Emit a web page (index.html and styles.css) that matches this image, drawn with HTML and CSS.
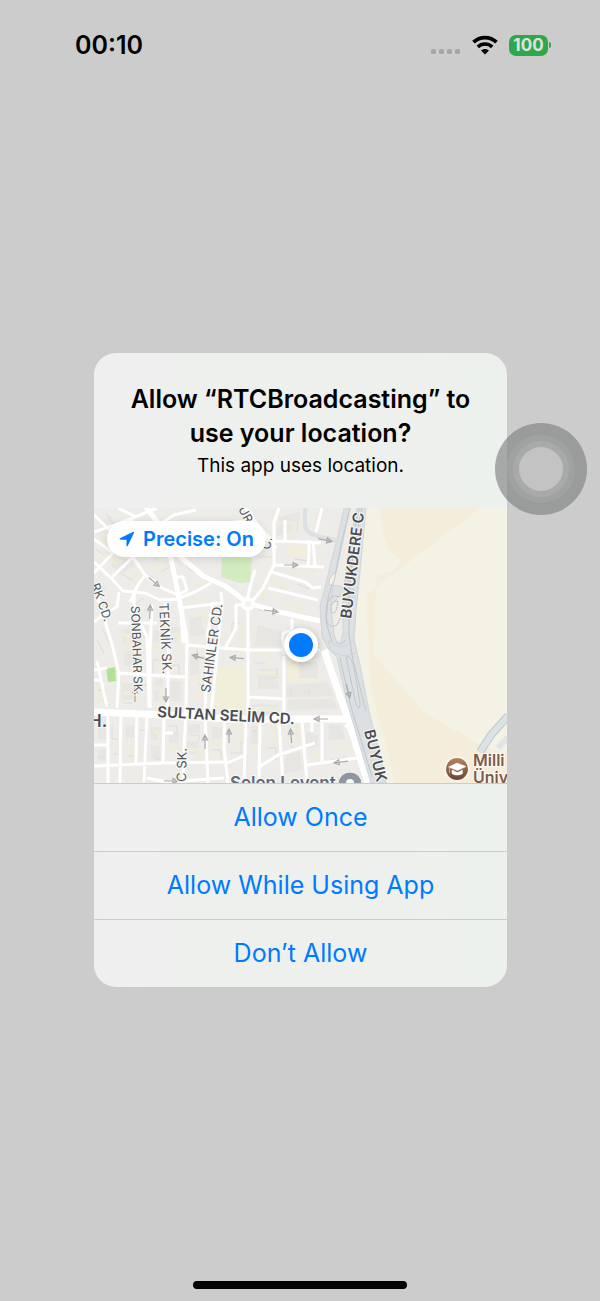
FILE: index.html
```html
<!DOCTYPE html>
<html lang="en">
<head>
<meta charset="utf-8">
<meta name="viewport" content="width=device-width, initial-scale=1">
<title>Location permission</title>
<link rel="stylesheet" href="styles.css">
</head>
<body>
<header class="status-bar">
  <time class="clock">00:10</time>
  <div class="indicators">
    <svg class="signal" width="30" height="6" viewBox="0 0 30 6" aria-hidden="true">
      <rect x="0" y="0" width="5" height="5" rx="1.5"/><rect x="8" y="0" width="5" height="5" rx="1.5"/><rect x="16" y="0" width="5" height="5" rx="1.5"/><rect x="24" y="0" width="5" height="5" rx="1.5"/>
    </svg>
    <svg class="wifi" width="26" height="20" viewBox="0 0 26 20" aria-hidden="true">
      <path d="M1.500 7.200C8 1 18 1 24.500 7.200" fill="none" stroke="#000" stroke-width="3.8"/>
      <path d="M5.800 11.900c4.200-3.900 10.200-3.900 14.400 0" fill="none" stroke="#000" stroke-width="3.600"/>
      <path d="M9 15.500c2.300-2.100 5.700-2.100 8 0L13 19.600z"/>
    </svg>
    <div class="battery"><span class="level">100</span><span class="tip"></span></div>
  </div>
</header>

<main class="stage">
  <section class="dialog" role="alertdialog" aria-labelledby="title" aria-describedby="reason">
    <div class="message">
      <h1 id="title" class="title">Allow “RTCBroadcasting” to use your location?</h1>
      <p id="reason" class="reason">This app uses location.</p>
    </div>
    <div class="map">
      <svg class="map-art" viewBox="94 508 413 275" preserveAspectRatio="xMidYMid slice">
        <defs>
          <linearGradient id="brown" x1="0" y1="0" x2="0" y2="1"><stop offset="0" stop-color="#b98563"/><stop offset="1" stop-color="#68432e"/></linearGradient>
          <g id="arrow" fill="none" stroke="#a9a9ab" stroke-width="1.2"><path d="M-7 0H6M2-2.500L7 0L2 2.500z"/></g>
        </defs>
        <rect x="94" y="508" width="413" height="275" fill="#edece8"/>
        <path fill="#f4eddb" d="M364 508H507V783H384L368 707L353 640L354 600z"/>
        <path fill="#f4f2e5" d="M366 508H381L382 532L388 548L401 560L394 571L375 575L376 587L480 508H507V755L480 744L426 714L373 654L376 587L366 595L371 690L388 752L395 783H384L368 707L353 640L354 600z"/>
        <!-- parks, plazas and building plots -->
        <path fill="#d2ebbf" d="M222 556L252 558L250 582L240 583L221 577z"/>
        <path fill="#b4e294" d="M106 669L115 667L116 681L108 682z"/>
        <path fill="#f1efd9" d="M212 667L245 666L245 711L210 704zM288 545L307 545L307 555L288 555zM287 657L310 655L322 680L287 681zM289 634L300 634V657H287z"/>
        <g fill="#e7e6e3">
          <path d="M299 662H318V678H299zM287 685L328 682L334 696L286 697zM252 704L279 705V716H252zM258 669L278 668V689H258zM279 517L300 512L298 531L276 536zM258 625L282 631L280 646L254 646zM288 700L333 699L338 709L287 710zM251 726L258 726V744H251zM286 755L300 751L302 770L284 774zM306 731L318 735V746L306 749zM329 724L341 725L345 739L328 741zM190 618L205 615L204 635L190 637z"/>
          <path d="M126 726h8v12h-8zM151 727h10v13h-10zM169 732h10v11h-10zM188 724h12v9h-12zM212 727h10v12h-10zM123 629h8v15h-8zM153 630h9v12h-9zM171 627h9v15h-9zM124 649h9v17h-9zM154 679h9v22h-9zM171 681h10v20h-10zM122 683h12v17h-12zM98 717h8v22h-8zM151 746h9v13h-9zM98 750h8v11h-8zM187 741h12v13h-12zM190 657h9v18h-9zM99 521l12-5 8 10-10 8zM111 565l13-8 11 9-14 8zM97 583l9 5-6 10-5-5zM149 549l9-7 8 12-11 8z"/>
        </g>
        <g class="plots"><path d="M100 534l11 12 12-7M128 517l11 8 7-7M103 552l13 11 9-7M128 582l10-8 6 4M151 565l11 5 5-9M96 587l7 6-3 6M119 635h9v14h-9M141 628v17h7M154 648h8v15h-5M172 635h7v14M99 680v21h6M123 693h11v11M154 688h7v13M188 681h12v16h-8M125 747h8v13h-8M154 732h6v10M168 749h11v9M188 750h11v9h-6M211 741l10 5-3 13M232 727h10v14h-10M252 747h7v11M267 727h9v14h-9M287 726h10v15M309 752l11 3-7 6M333 744l11 1 2 8M256 673h20v8M252 709h27M255 654h14v11M291 569l14 4 12-2M270 579l15 6-10 7M281 602l20 5-2 7M257 586l9 7-7 9M278 523h17l-2 14M283 535v5h10M194 570l14 9-8 6M188 599h16M193 613h11v15M234 625h8v26h-8"/></g>
        <g class="plot-lines"><path d="M106 513l7 11-12 9M129 536l-9 7 7 7M144 526l9 10M96 549l8 6M119 572l13 8M144 598l-12 8 7 7M171 565l-9 7M175 537l9 8M103 629l7 16M97 640l7 13M127 656h7v10M139 637h8v11M159 660h-6v14M171 665h8v9M98 690h9M123 703h9M139 685h9v14M188 646h9v8M199 684l8 2M98 757h7M112 726v13h6M113 754h6M128 756h7M140 730h5v12M154 759h6M168 726h9v8M190 735h9v6M213 750h8v9M230 753h11v-11M252 731h5M267 748h9v12M290 746l8 4M331 759h13v-4M239 623h-7v11M258 610h16v7M255 663h10M277 668v10h-6M291 689v7M309 689v5M265 540h11M258 557h15v7M294 559l15 2M270 569l15 8M297 584l13 5M246 546h8M198 545l12 7M184 532l10 6M194 572l-8-6"/></g>
        <!-- streets -->
        <g class="lane">
          <path d="M94 562L112 579L123 591L145 593L160 600L177 599L197 591L211 583M94 539L113 553L134 516L118 508M133 557L145 575L162 588L178 595L187 590L183 577L175 577M145 575L138 585L130 602M94 622L107 612L117 607L119 592M118 623L157 623M181 608L222 603L221 592M110 579L133 557L123 543L94 515M94 532L115 525L157 508M113 553L94 573M157 526L174 515L196 510M176 550L218 524L254 520"/>
          <path d="M97 595L113 648L119 674L117 708M97 661L107 707M94 670L107 668M94 680L101 680M118 673L185 677M134 593L134 610L147 637L149 707M152 605L150 650L150 708M165 603L169 638L167 714M183 615L187 637L186 704L183 783M187 645L248 650M213 602L208 633L205 714L208 783M222 603L211 715"/>
          <path d="M108 710V783M121 713L120 783M137 713L136 764M147 714L144 782M164 716L163 764M225 718L224 747L228 783M246 720L244 783M260 721L259 783M279 721L283 783M302 722L307 783M322 723L322 761M94 766L163 763L230 762L246 755M94 745H108M147 778L167 782L224 778M163 733H173M307 765L357 758M259 767L278 755L315 743M312 722V732M194 718L193 710M345 725L367 744L375 742"/>
          <path d="M248 605V715M284 656V718M247 650H320M248 697L284 699M292 619L292 628Q292 632 286 632Q282 633 283 640L284 655M248 604L236 605V628L224 650"/>
          <path d="M279 508L274 523V565L263 588L250 604M275 541L304 542L321 543M285 520V540M313 541L315 566M309 540V553L308 566M322 508L316 532M274 565L324 567M272 572L305 582L313 588L321 587M268 588L318 600M255 570L252 580L247 599"/>
        </g>
        <path class="street" d="M145 506L160 525L182 558L203 576L225 586L248 603L279 612L320 621M166 533L172 563L178 593L182 615L184 643M246 508L254 522L270 540L275 549"/>
        <path class="avenue" d="M94 712L164 715L230 719L348 719M324 650L334 679L348 719L368 783"/>
        <circle cx="248" cy="604" r="5" fill="#f3f2ef" stroke="#fff" stroke-width="4"/>
        <!-- divided highway -->
        <path class="highway" d="M344 508L337 540L331 562L326 584L320 606L322 636L328 648L337 657L347 702L367 770L371 783H386L378 748L369 711L360 665L354 640L356 610L359 582L366 508H357L349 546L343 590L343 633L339 648L334 634L331 609L333 585L340 555L350 508z"/>
        <path class="highway" d="M333 585L343 587L355 590L354 598L340 596L331 605zM328 640Q341 653 354 640L357 652Q341 661 330 649z"/>
        <path class="highway-line" d="M350 508L341 545L336 571L328 598L326 622L332 642M362 508L354 548L349 590V635L353 660L366 711M359 508L351 548M353 540L348 582M340 658L351 707L372 777M346 657L350 676L356 704Q360 713 360 703L354 668Q350 653 346 657M340 597Q328 592 326 610Q325 631 337 625L342 615M338 601Q330 601 331 611Q335 617 337 607zM337 642q5 4 8-2"/>
        <path fill="#f4f2e5" stroke="#c9ced3" d="M333 574Q336 571 335 578Q332 588 329 584Q328 579 333 574z"/>
        <path d="M305 508V524Q305 536 328 538L337 541" fill="none" stroke="#dce0e2" stroke-width="4"/>
        <path d="M480 752L491 735L508 716" fill="none" stroke="#bfc9d0" stroke-width="8"/><path d="M480 752L491 735L508 716" fill="none" stroke="#dce1e3" stroke-width="6"/><path d="M498 748l10-11" stroke="#e2e4e5" stroke-width="6"/>
        <!-- traffic direction -->
        <use href="#arrow" transform="translate(154 582) rotate(40)"/><use href="#arrow" transform="translate(150 612) rotate(-88)"/>
        <use href="#arrow" transform="translate(291 565)"/><use href="#arrow" transform="translate(271 611) rotate(8)"/><use href="#arrow" transform="translate(325 540) rotate(12)"/>
        <use href="#arrow" transform="translate(166 695) rotate(90)"/><use href="#arrow" transform="translate(135 695) rotate(-90)"/><use href="#arrow" transform="translate(199 657) rotate(-165)"/><use href="#arrow" transform="translate(237 658) rotate(-175)"/>
        <use href="#arrow" transform="translate(205 742) rotate(-90)"/><use href="#arrow" transform="translate(229 736) rotate(-90)"/><use href="#arrow" transform="translate(291 736) rotate(-95)"/><use href="#arrow" transform="translate(321 719) rotate(180)"/><use href="#arrow" transform="translate(341 762) rotate(173)"/><use href="#arrow" transform="translate(348 691) rotate(75)"/><use href="#arrow" transform="translate(171 781)"/>
        <!-- street names -->
        <g class="name">
          <text transform="translate(91 585) rotate(70)">RK CD.</text>
          <text transform="translate(131 606) rotate(88)">SONBAHAR SK.</text>
          <text class="wide" transform="translate(159 603) rotate(87)">TEKNİK SK.</text>
          <text class="wide" transform="translate(210 693) rotate(-82)">SAHINLER CD.</text>
          <text class="wide" transform="translate(186 782) rotate(-89)">C SK.</text>
          <text transform="translate(238 509) rotate(62)">UR</text>
          <text transform="translate(270 550) rotate(-80)">C.</text>
        </g>
        <g class="name major">
          <text transform="translate(157 717) rotate(3)">SULTAN SELİM CD.</text>
          <text class="large" x="89" y="727">H.</text>
          <text transform="translate(351 619) rotate(-83)">BUYUKDERE C</text>
          <text transform="translate(364 731) rotate(76)">BUYUK</text>
          <text class="place" x="230" y="789">Selen Levent</text>
        </g>
        <circle cx="350" cy="784" r="12" fill="#8f969f" stroke="#f4f3f0" stroke-width="1"/><circle cx="350" cy="783" r="4" fill="#fff"/>
        <circle cx="457" cy="769" r="12" fill="url(#brown)" stroke="#f8f4ea" stroke-width="2"/>
        <path d="M448.500 767l8.500-4 9 3.500-8.500 4zM452 770l5.500 2.500 5-2.500v3.500c-3 2-7.500 2-10.500 0zM449.500 768v5" fill="#fff" stroke="#fff" stroke-width=".5"/>
        <g class="school"><text x="473" y="766">Milli</text><text x="473" y="783">Üniv</text></g>
      </svg>
      <span class="position"></span>
      <button class="precise" type="button">
        <svg width="18" height="16" viewBox="0 0 18 16" aria-hidden="true"><path d="M2 7.300L15.300.7Q16.500.4 16 1.700L9.700 15Q8.800 16 8.500 14.700V8.700H2.500Q.8 8.300 2 7.300z" fill="#007aff"/></svg>
        <span>Precise: On</span>
      </button>
    </div>
    <div class="actions">
      <button class="action" type="button">Allow Once</button>
      <button class="action" type="button">Allow While Using App</button>
      <button class="action" type="button">Don’t Allow</button>
    </div>
  </section>
</main>

<button class="assistive" type="button" aria-label="AssistiveTouch"><span class="ring"><span class="core"></span></span></button>
<footer class="home"><span class="home-bar"></span></footer>
</body>
</html>
```

FILE: styles.css
```css
* { box-sizing: border-box; }
body {
  margin: 0;
  min-height: 100vh;
  display: flex;
  flex-direction: column;
  background: #ccc;
  color: #000;
  font-family: Inter, "Liberation Sans", sans-serif;
}
button { border: 0; margin: 0; font-family: inherit; color: #007aff; cursor: pointer; }
.status-bar {
  display: flex;
  justify-content: space-between;
  align-items: center;
  height: 90px;
  padding: 0 49px 0 75px;
}
.clock { font-size: 25px; font-weight: 600; }
.indicators { display: flex; align-items: center; gap: 11px; }
.signal { fill: #a5a5a5; margin-top: 13px; }
.battery { display: flex; align-items: center; gap: 1px; }
.level {
  width: 39px;
  height: 21px;
  border-radius: 7px;
  background: #2da84a;
  color: #e0e0e0;
  font-size: 17px;
  line-height: 21px;
  font-weight: 700;
  text-align: center;
}
.tip { width: 2px; height: 6px; border-radius: 0 2px 2px 0; background: #2da84a; }
.stage { flex: 1; display: flex; justify-content: center; align-items: center; padding: 0 24px 32px 25px; }
.dialog {
  width: 100%;
  max-width: 413px;
  border-radius: 22px;
  overflow: hidden;
  background: linear-gradient(90deg, #efefef, #eef0ee 20%, #eef0ed 75%, #ecf1ee);
}
.message { padding: 29px 24px 28px; text-align: center; }
.title { margin: 0; font-size: 25px; line-height: 34px; font-weight: 600; }
.reason { margin: 2px 0 0; font-size: 19px; line-height: 28px; }
.map { position: relative; aspect-ratio: 413 / 275; overflow: hidden; }
.map-art { display: block; width: 100%; height: 100%; }
.lane, .street, .avenue { fill: none; stroke: #fff; stroke-linejoin: round; stroke-width: 3px; }
.street { stroke-width: 5px; }
.avenue { stroke-width: 7px; }
.plots { fill: none; stroke: #eeecdc; stroke-width: 4px; }
.plot-lines { fill: none; stroke: #dedcd7; stroke-width: 1px; }
.highway { fill: #dce0e2; stroke: #d0d5d9; }
.highway-line { fill: none; stroke: #c0c7cc; stroke-width: 1px; }
.name { fill: #55565a; stroke: #f8f8f6; stroke-width: 2px; paint-order: stroke; font-size: 12px; }
.wide { font-size: 13px; }
.major { fill: #4b4c50; font-size: 15px; font-weight: 600; }
.large { font-size: 17px; }
.school { fill: #80594a; stroke: #fffaf2; stroke-width: 2px; paint-order: stroke; font-size: 16px; font-weight: 600; }
.place { fill: #626879; font-size: 17px; }
.position {
  position: absolute;
  top: 50%;
  left: 50%;
  width: 34px;
  height: 34px;
  transform: translate(-50%, -50%);
  border: 5px solid #fff;
  border-radius: 50%;
  background: #007aff;
  box-shadow: 0 2px 8px #0004;
}
.precise {
  position: absolute;
  top: 13px;
  left: 13px;
  height: 36px;
  display: flex;
  align-items: center;
  gap: 7px;
  padding: 0 12px 0 11px;
  border-radius: 18px;
  background: #fff;
  box-shadow: 0 2px 8px #0002;
  font-size: 20px;
  font-weight: 600;
}
.actions { display: flex; flex-direction: column; }
.action { height: 68px; padding: 0; border-top: 1px solid #cacdca; background: transparent; font-size: 25px; }
.assistive {
  position: absolute;
  top: 423px;
  right: 13px;
  width: 92px;
  height: 92px;
  padding: 0;
  display: grid;
  place-items: center;
  border-radius: 50%;
  background: #777b7999;
}
.ring {
  display: grid;
  place-items: center;
  width: 68px;
  height: 68px;
  border: 6px solid #a0a2a1;
  border-radius: 50%;
  background: #a8aaa9;
}
.core { width: 44px; height: 44px; border-radius: 50%; background: #c3c3c3; }
.home { display: flex; justify-content: center; padding: 0 0 12px; }
.home-bar { width: 36%; max-width: 214px; height: 8px; border-radius: 4px; background: #000; }
```
